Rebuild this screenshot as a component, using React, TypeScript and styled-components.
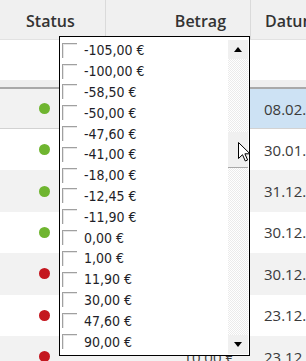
import React from 'react';
import styled, { createGlobalStyle } from 'styled-components';

const GlobalStyle = createGlobalStyle`
	html, body {
		margin: 0;
		padding: 0;
		background: #fff;
		overflow: hidden;
	}
`;

const COLUMNS = '105px 145px 1fr';

const rows = [
	{ ok: true, amount: '-50,00 €', date: '08.02.2024' },
	{ ok: true, amount: '-41,00 €', date: '30.01.2024' },
	{ ok: true, amount: '-12,45 €', date: '31.12.2023' },
	{ ok: true, amount: '-11,90 €', date: '30.12.2023' },
	{ ok: false, amount: '30,00 €', date: '30.12.2023' },
	{ ok: false, amount: '47,60 €', date: '23.12.2023' },
	{ ok: false, amount: '10,00 €', date: '23.12.2023' },
];

const amounts = [
	'-105,00 €',
	'-100,00 €',
	'-58,50 €',
	'-50,00 €',
	'-47,60 €',
	'-41,00 €',
	'-18,00 €',
	'-12,45 €',
	'-11,90 €',
	'0,00 €',
	'1,00 €',
	'11,90 €',
	'30,00 €',
	'47,60 €',
	'90,00 €',
];

const App = () => {
	return (
		<Page>
			<GlobalStyle />
			<HeaderRow>
				<HeaderCell $align='left' $pad='0 0 0 26px'>Status</HeaderCell>
				<HeaderCell $align='right' $pad='0 24px 0 0' $divider>
					Betrag
				</HeaderCell>
				<HeaderCell $align='left' $pad='0 0 0 14px' $divider>
					Datum
				</HeaderCell>
			</HeaderRow>
			<FilterRow />
			<Band />
			{rows.map((row, i) => (
				<Row key={i} $alt={i % 2 === 0} $selected={i === 0}>
					<StatusCell>
						<Dot $ok={row.ok} />
					</StatusCell>
					<AmountCell>{row.amount}</AmountCell>
					<DateCell $selected={i === 0}>{row.date}</DateCell>
				</Row>
			))}

			<Dropdown>
				<List>
					{amounts.map((a) => (
						<Item key={a}>
							<CheckBox />
							<Label>{a}</Label>
						</Item>
					))}
				</List>
				<ScrollBar>
					<ScrollButton>
						<svg width='8' height='5' viewBox='0 0 8 5'>
							<polygon points='0,5 8,5 4,0' fill='#000' />
						</svg>
					</ScrollButton>
					<Track>
						<Thumb />
					</Track>
					<ScrollButton>
						<svg width='8' height='5' viewBox='0 0 8 5'>
							<polygon points='0,0 8,0 4,5' fill='#000' />
						</svg>
					</ScrollButton>
				</ScrollBar>
			</Dropdown>

			<Cursor width='13' height='20' viewBox='0 0 13 20'>
				<path
					d='M0.5 0.5 L0.5 16.5 L4.5 12.7 L7.3 19 L9.6 18 L6.9 11.8 L12 11.8 Z'
					fill='#fff'
					stroke='#000'
					strokeWidth='1'
					strokeLinejoin='miter'
				/>
			</Cursor>
		</Page>
	);
};

const Page = styled.div`
	position: relative;
	width: 306px;
	height: 361px;
	overflow: hidden;
	background: #fff;
	font-family: 'Open Sans', 'Noto Sans', sans-serif;
`;

const HeaderRow = styled.div`
	display: grid;
	grid-template-columns: ${COLUMNS};
	height: 39px;
	background: #f0f0f0;
	border-bottom: 1px solid #e2e2e2;
`;

const HeaderCell = styled.div<{ $align: 'left' | 'right'; $pad: string; $divider?: boolean }>`
	display: flex;
	align-items: center;
	justify-content: ${(p) => (p.$align === 'right' ? 'flex-end' : 'flex-start')};
	padding: ${(p) => p.$pad};
	padding-top: 2px;
	border-left: ${(p) => (p.$divider ? '1px solid #dadada' : 'none')};
	font-size: 16px;
	font-weight: 600;
	color: #333;
	white-space: nowrap;
	overflow: hidden;
`;

const FilterRow = styled.div`
	height: 40px;
	background: #fff;
`;

const Band = styled.div`
	height: 7px;
	background: #efefef;
`;

const Row = styled.div<{ $alt: boolean; $selected: boolean }>`
	display: grid;
	grid-template-columns: ${COLUMNS};
	height: ${(p) => (p.$selected ? '39px' : '41.4px')};
	background: ${(p) => (p.$alt ? '#f2f2f2' : '#fff')};
	border-top: ${(p) => (p.$selected ? '2px solid #a9a9a9' : 'none')};
	border-bottom: ${(p) => (p.$selected ? '1px solid #d2d2d2' : 'none')};
`;

const StatusCell = styled.div`
	display: flex;
	align-items: center;
	justify-content: center;
	padding-right: 17px;
`;

const Dot = styled.div<{ $ok: boolean }>`
	width: 11px;
	height: 11px;
	border-radius: 50%;
	background: ${(p) => (p.$ok ? '#6fb530' : '#c4171f')};
`;

const AmountCell = styled.div`
	display: flex;
	align-items: center;
	justify-content: flex-end;
	padding-right: 16px;
	font-size: 15px;
	color: #3a3a3a;
	white-space: nowrap;
`;

const DateCell = styled.div<{ $selected: boolean }>`
	display: flex;
	align-items: center;
	padding-left: 14px;
	font-size: 15px;
	color: #3a3a3a;
	white-space: nowrap;
	overflow: hidden;
	background: ${(p) => (p.$selected ? '#cde2f4' : 'transparent')};
`;

const Dropdown = styled.div`
	position: absolute;
	left: 59px;
	top: 36px;
	width: 191px;
	height: 320px;
	box-sizing: border-box;
	border: 1px solid #000;
	background: #fff;
	display: flex;
`;

const List = styled.div`
	flex: 1;
	display: flex;
	flex-direction: column;
	padding: 3px 0 0 2px;
`;

const Item = styled.div`
	display: flex;
	align-items: center;
	gap: 7px;
	height: 20.8px;
	flex-shrink: 0;
`;

const CheckBox = styled.div`
	width: 15px;
	height: 15px;
	box-sizing: border-box;
	border-top: 1px solid #a0a0a0;
	border-left: 1px solid #a0a0a0;
	box-shadow: inset 1px 1px 0 #e6e6e6;
	flex-shrink: 0;
`;

const Label = styled.span`
	font-family: 'DejaVu Sans Condensed', 'Liberation Sans', sans-serif;
	font-size: 14px;
	color: #1e1e28;
	white-space: nowrap;
`;

const ScrollBar = styled.div`
	width: 20px;
	display: flex;
	flex-direction: column;
	padding: 3px 1px 1px 0;
`;

const ScrollButton = styled.div`
	height: 19px;
	flex-shrink: 0;
	display: flex;
	align-items: center;
	justify-content: center;
	background: #f0f0f0;
`;

const Track = styled.div`
	flex: 1;
	display: flex;
	flex-direction: column;
	background: repeating-conic-gradient(#ebebeb 0 25%, #fff 0 50%) 0 0 / 2px 2px;
`;

const Thumb = styled.div`
	margin-top: 73px;
	height: 36px;
	box-sizing: border-box;
	background: #f0f0f0;
	border-bottom: 1px solid #a8a8a8;
`;

const Cursor = styled.svg`
	position: absolute;
	left: 238px;
	top: 142px;
`;

export default App;
